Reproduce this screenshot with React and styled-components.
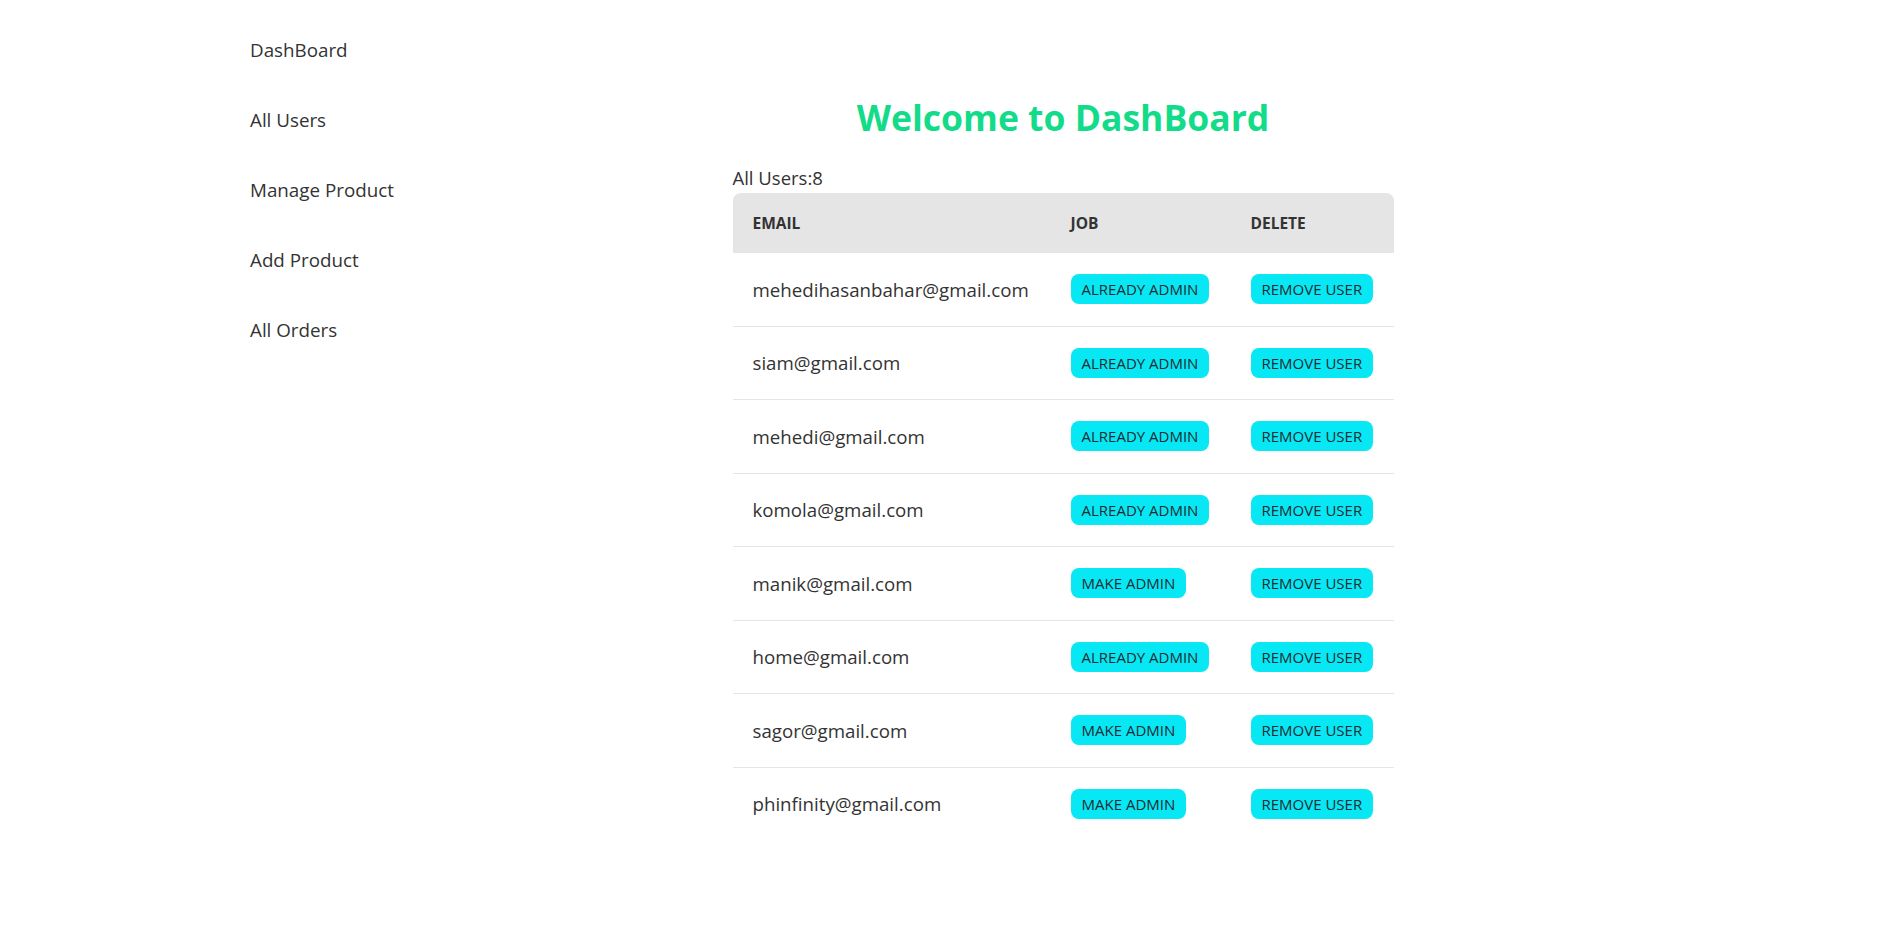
import React from "react"
import styled, { createGlobalStyle } from "styled-components"

const GlobalStyle = createGlobalStyle`
  body {
    margin: 0;
    background: #ffffff;
    color: #333333;
    font-family: "Open Sans", "Noto Sans", sans-serif;
  }
`

const Page = styled.div`
  display: flex;
  padding: 0 250px;
  min-height: 936px;
  box-sizing: border-box;
`

const Sidebar = styled.nav`
  display: flex;
  flex-direction: column;
  width: 228px;
  flex-shrink: 0;
  padding-top: 15px;
`

const NavItem = styled.a`
  display: flex;
  align-items: center;
  height: 70px;
  font-size: 18.8px;
  color: #333333;
  text-decoration: none;
  cursor: pointer;
`

const Main = styled.main`
  flex: 1;
  display: flex;
  flex-direction: column;
  align-items: center;
`

const Title = styled.h1`
  margin: 94px 0 0;
  font-size: 35.5px;
  line-height: 46px;
  font-weight: 700;
  color: #12db89;
`

const Content = styled.div`
  width: 661px;
  margin-top: 26px;
`

const Count = styled.div`
  font-size: 18.5px;
  line-height: 24px;
  padding-bottom: 3px;
  color: #333333;
`

const Table = styled.table`
  width: 100%;
  border-collapse: separate;
  border-spacing: 0;
  table-layout: fixed;
`

const Th = styled.th`
  width: ${(p) => p.$width}px;
  height: 60px;
  padding: 0 20px;
  text-align: left;
  font-size: 15.5px;
  font-weight: 700;
  text-transform: uppercase;
  color: #333333;
  background: #e5e5e5;
  box-sizing: border-box;

  &:first-child {
    border-top-left-radius: 8px;
  }
  &:last-child {
    border-top-right-radius: 8px;
  }
`

const Row = styled.tr`
  &:not(:last-child) td {
    border-bottom: 1px solid #e5e5e5;
  }
`

const Td = styled.td`
  height: 72.5px;
  padding: 0 20px;
  font-size: 18.7px;
  color: #333333;
  white-space: nowrap;
`

const ActionButton = styled.button`
  height: 30px;
  padding: 0 11px;
  border: none;
  border-radius: 8px;
  background: #08e8f4;
  color: #1f2b33;
  font-family: "Open Sans", "Noto Sans", sans-serif;
  font-size: 15px;
  font-weight: 500;
  text-transform: uppercase;
  white-space: nowrap;
  cursor: pointer;
`

const users = [
  { email: "mehedihasanbahar@gmail.com", admin: true },
  { email: "siam@gmail.com", admin: true },
  { email: "mehedi@gmail.com", admin: true },
  { email: "komola@gmail.com", admin: true },
  { email: "manik@gmail.com", admin: false },
  { email: "home@gmail.com", admin: true },
  { email: "sagor@gmail.com", admin: false },
  { email: "phinfinity@gmail.com", admin: false },
]

const App = () => {
  return (
    <>
      <GlobalStyle />
      <Page>
        <Sidebar>
          <NavItem>DashBoard</NavItem>
          <NavItem>All Users</NavItem>
          <NavItem>Manage Product</NavItem>
          <NavItem>Add Product</NavItem>
          <NavItem>All Orders</NavItem>
        </Sidebar>
        <Main>
          <Title>Welcome to DashBoard</Title>
          <Content>
            <Count>All Users:{users.length}</Count>
            <Table>
              <thead>
                <tr>
                  <Th $width={318}>Email</Th>
                  <Th $width={180}>Job</Th>
                  <Th $width={163}>Delete</Th>
                </tr>
              </thead>
              <tbody>
                {users.map((user) => (
                  <Row key={user.email}>
                    <Td>{user.email}</Td>
                    <Td>
                      <ActionButton>
                        {user.admin ? "Already Admin" : "Make Admin"}
                      </ActionButton>
                    </Td>
                    <Td>
                      <ActionButton>Remove User</ActionButton>
                    </Td>
                  </Row>
                ))}
              </tbody>
            </Table>
          </Content>
        </Main>
      </Page>
    </>
  )
}

export default App
